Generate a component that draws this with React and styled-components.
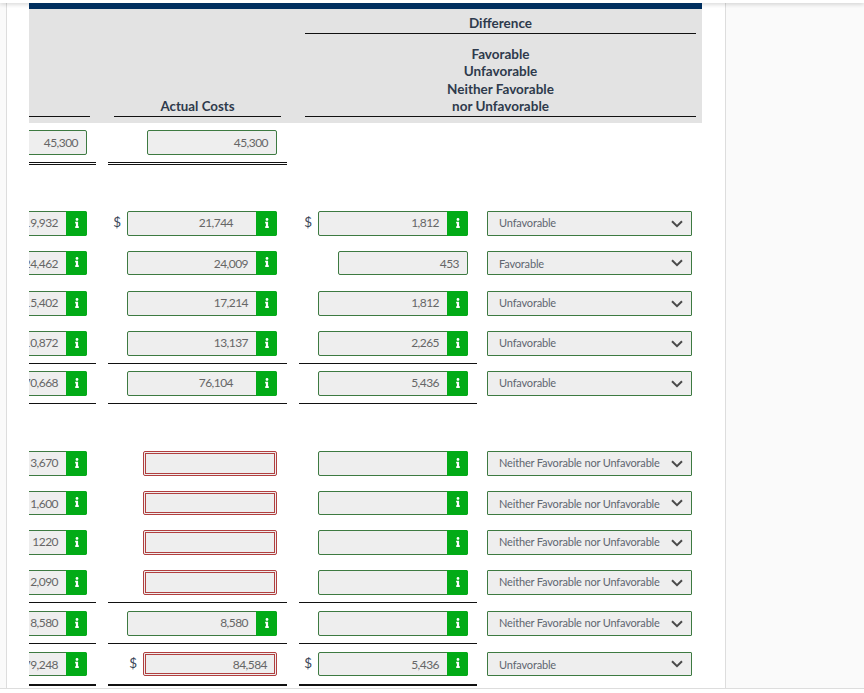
import React from "react";
import styled, { createGlobalStyle, css } from "styled-components";
import { FaInfo } from "react-icons/fa";

const Global = createGlobalStyle`
  html, body { margin: 0; padding: 0; background: #fafafa; }
  body { font-family: Lato, "Noto Sans", sans-serif; color: #555; }
`;

const Page = styled.div`
  width: 864px;
  height: 693px;
  position: relative;
  overflow: hidden;
  background: #fafafa;
`;

const TopEdge = styled.div`
  height: 3px;
  background: #fff;
  box-shadow: 0 1px 4px rgba(0, 0, 0, 0.22);
  position: relative;
`;

const Sheet = styled.main`
  width: 696px;
  height: 685px;
  margin-left: 6px;
  padding-left: 22px;
  background: #fff;
  border-left: 1px solid #ddd;
  border-right: 1px solid #ddd;
`;

const BottomEdge = styled.div`
  height: 4px;
  background: #fff;
  border-top: 1px solid #ddd;
`;

const Scroller = styled.div`
  width: 673px;
  height: 685px;
  overflow: hidden;
  position: relative;
`;

const NavyBar = styled.div`
  height: 6px;
  background: #002f5f;
`;

const Head = styled.div`
  height: 114px;
  box-sizing: border-box;
  padding-bottom: 6px;
  background: #e3e3e3;
  overflow: hidden;
`;

const HeadGrid = styled.div`
  height: 100%;
  margin-left: -59px;
  display: grid;
  grid-template-columns: 120px 167px 391px;
  column-gap: 24px;
`;

const HeadCell = styled.div`
  display: flex;
  flex-direction: column;
  justify-content: flex-end;
  border-bottom: 1px solid #111;
  padding-bottom: 0.4px;
  text-align: center;
  font-size: ${(p) => p.$size || 13.3}px;
  font-weight: 700;
  line-height: 17.5px;
  color: #2e3a4c;
`;

const DiffStack = styled.div`
  display: flex;
  flex-direction: column;
  justify-content: space-between;
  height: 100%;
`;

const DiffTitle = styled(HeadCell)`
  height: 25px;
  box-sizing: border-box;
  padding-bottom: 1px;
`;

const Rows = styled.div`
  margin-left: -59px;
  padding-top: 7px;
`;

const Row = styled.div`
  display: grid;
  grid-template-columns: 126px 179px 178px 205px;
  column-gap: 12px;
  height: ${(p) => p.$h}px;
  & > :nth-child(4) { margin-left: -2px; }
`;

const rules = {
  single: css`border-bottom: 1px solid #111;`,
  double: css`border-bottom: 3px double #111;`,
  thick: css`border-bottom: 2px solid #111;`,
  none: css`border-bottom: 1px solid transparent;`,
};

const Slot = styled.div`
  display: flex;
  justify-content: flex-end;
  align-items: flex-start;
  gap: 6px;
  height: ${(p) => (p.$rule === "double" ? 35 : p.$rule === "thick" ? 34 : 33)}px;
  box-sizing: border-box;
  padding-right: ${(p) => (p.$col === 2 ? 10 : 9)}px;
  ${(p) => rules[p.$rule || "none"]}
`;

const Dollar = styled.span`
  font-size: 13.5px;
  line-height: 22px;
  color: #3a4658;
`;

const Field = styled.div`
  display: flex;
  width: ${(p) => p.$w}px;
  height: ${(p) => p.$fh}px;
  box-sizing: border-box;
  background: #eee;
  border: ${(p) => (p.$bad ? "3px double #b13f3f" : "1px solid #3d7a41")};
  border-radius: 2px;
  flex: none;
`;

const Value = styled.div`
  flex: 1;
  min-width: 0;
  overflow: hidden;
  text-align: right;
  font-size: 12px;
  letter-spacing: -0.55px;
  line-height: ${(p) => p.$lh}px;
  color: #666;
  padding-right: ${(p) => p.$pad}px;
  white-space: nowrap;
`;

const InfoBtn = styled.div`
  width: 21px;
  margin: -1px -1px -1px 0;
  padding-bottom: 2px;
  box-sizing: border-box;
  flex: none;
  background: #02ab17;
  color: #fff;
  display: flex;
  align-items: center;
  justify-content: center;
  border-radius: 0 2px 2px 0;
`;

const Select = styled.div`
  display: flex;
  align-items: center;
  justify-content: space-between;
  width: 205px;
  height: ${(p) => p.$fh}px;
  box-sizing: border-box;
  background: #eee;
  border: 1px solid #3d7a41;
  border-radius: 1px;
  padding: 0 8px 0 11px;
  font-size: 11px;
  letter-spacing: -0.17px;
  color: #5e6670;
  white-space: nowrap;
`;

const SelectText = styled.span`
  position: relative;
  top: ${(p) => (p.$fh === 25 ? -1 : 0)}px;
`;

const Chevron = () => (
  <svg width="12" height="8" viewBox="0 0 12 8" fill="none">
    <path d="M1 1.3 6 6.2 11 1.3" stroke="#4a4a4a" strokeWidth="2" />
  </svg>
);

const lineFor = (fh, info, bad) => {
  if (bad) return 19;
  if (info) return fh === 25 ? 22 : 23;
  return 24;
};

const Input = ({ v = "", w, fh, info, bad, pad }) => (
  <Field $w={w} $fh={fh} $bad={bad}>
    <Value $lh={lineFor(fh, info, bad)} $pad={pad ?? (bad ? 7 : 8)}>{v}</Value>
    {info && (
      <InfoBtn>
        <FaInfo size={10} />
      </InfoBtn>
    )}
  </Field>
);

const U = "Unfavorable";
const F = "Favorable";
const N = "Neither Favorable nor Unfavorable";

const data = [
  { h: 40, fh: 25, a: "19,932", b: "21,744", bPad: 23, bD: true, c: "1,812", cD: true, s: U },
  { h: 40, fh: 24, a: "24,462", b: "24,009", c: "453", cPlain: true, s: F },
  { h: 40, fh: 25, a: "15,402", b: "17,214", c: "1,812", s: U },
  { h: 40, fh: 25, a: "10,872", b: "13,137", c: "2,265", s: U, rule: "single" },
  { h: 80, fh: 25, a: "70,668", b: "76,104", bPad: 23, c: "5,436", s: U, rule: "single" },
  { h: 40, fh: 25, a: "3,670", bBad: true, c: "", s: N },
  { h: 39, fh: 24, a: "1,600", bBad: true, c: "", s: N },
  { h: 40, fh: 25, a: "1220", bBad: true, c: "", s: N },
  { h: 41, fh: 25, a: "2,090", bBad: true, c: "", s: N, rule: "single" },
  { h: 41, fh: 25, a: "8,580", b: "8,580", c: "", s: N, rule: "single" },
  { h: 34, fh: 24, a: "79,248", b: "84,584", bBad: true, bD: true, c: "5,436", cD: true, s: U, rule: "thick" },
];

export default function App() {
  return (
    <Page>
      <Global />
      <TopEdge />
      <Sheet>
        <Scroller>
          <NavyBar />
          <Head>
            <HeadGrid>
              <HeadCell />
              <HeadCell>Actual Costs</HeadCell>
              <DiffStack>
                <DiffTitle $size={13.5}>Difference</DiffTitle>
                <HeadCell $size={13.5}>
                  <div>Favorable</div>
                  <div>Unfavorable</div>
                  <div>Neither Favorable</div>
                  <div>nor Unfavorable</div>
                </HeadCell>
              </DiffStack>
            </HeadGrid>
          </Head>
          <Rows>
            <Row $h={81}>
              <Slot $col={1} $rule="double">
                <Input v="45,300" w={120} fh={25} />
              </Slot>
              <Slot $col={2} $rule="double">
                <Input v="45,300" w={130} fh={25} />
              </Slot>
            </Row>
            {data.map((r, i) => (
              <Row key={i} $h={r.h}>
                <Slot $col={1} $rule={r.rule}>
                  <Input v={r.a} w={120} fh={r.fh} info />
                </Slot>
                <Slot $col={2} $rule={r.rule}>
                  {r.bD && <Dollar>$</Dollar>}
                  {r.bBad ? (
                    <Input v={r.b} w={134} fh={r.fh} bad />
                  ) : (
                    <Input v={r.b} w={150} fh={r.fh} info pad={r.bPad} />
                  )}
                </Slot>
                <Slot $col={3} $rule={r.rule}>
                  {r.cD && <Dollar>$</Dollar>}
                  {r.cPlain ? (
                    <Input v={r.c} w={130} fh={r.fh} />
                  ) : (
                    <Input v={r.c} w={150} fh={r.fh} info />
                  )}
                </Slot>
                <div>
                  <Select $fh={r.fh}>
                    <SelectText $fh={r.fh}>{r.s}</SelectText>
                    <Chevron />
                  </Select>
                </div>
              </Row>
            ))}
          </Rows>
        </Scroller>
      </Sheet>
      <BottomEdge />
    </Page>
  );
}
